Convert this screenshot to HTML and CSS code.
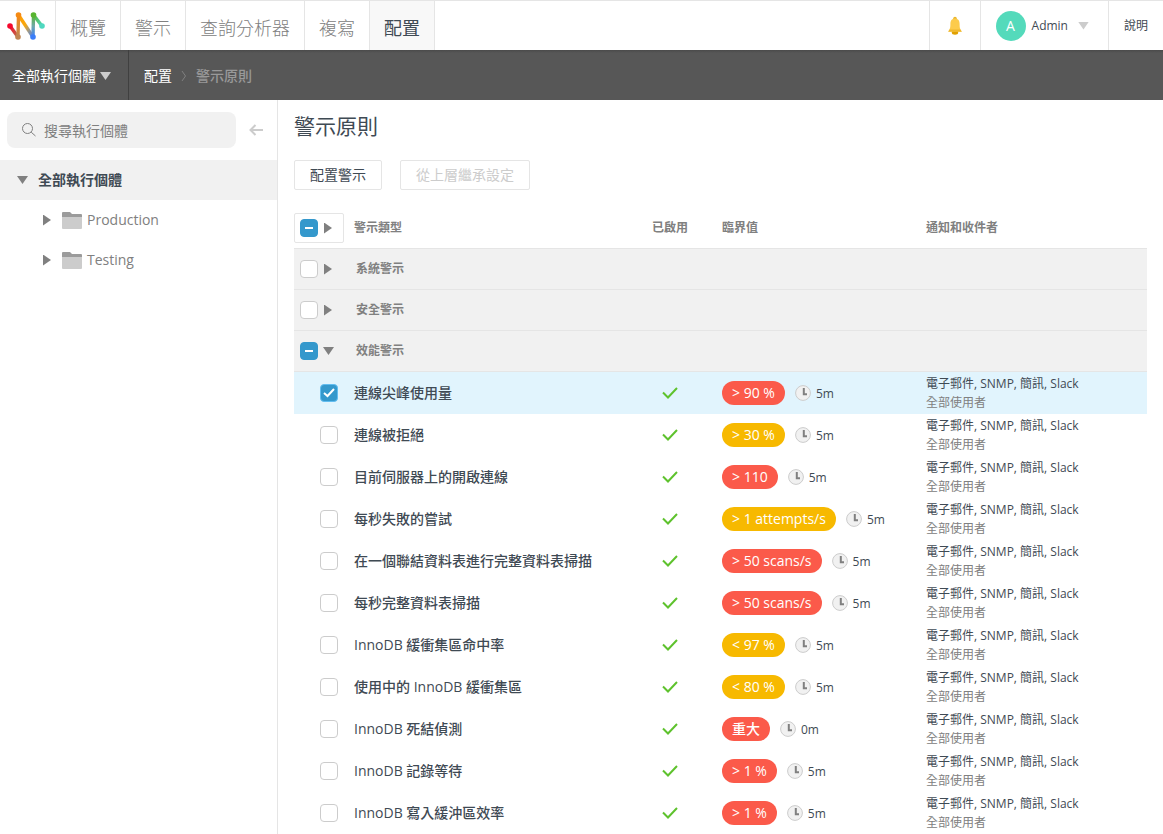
FILE: index.html
```html
<!DOCTYPE html>
<html lang="zh-Hant">
<head>
    <meta charset="UTF-8">
    <meta name="viewport" content="width=device-width, initial-scale=1.0">
    <title>警示原則</title>
    <link rel="stylesheet" href="styles.css">
</head>
<body>

    <!-- Shared icons -->
    <svg class="icon-defs" aria-hidden="true">
        <symbol id="icon-check" viewBox="0 0 16 12">
            <path d="M1 5.5L6 10.5L15 1" fill="none" stroke="#5ec22d" stroke-width="2"/>
        </symbol>
        <symbol id="icon-clock" viewBox="0 0 16 16">
            <circle cx="8" cy="8" r="7.4" fill="#f1f1f1" stroke="#ccc"/>
            <path d="M8.8 3V9.3H12" fill="none" stroke="#808080" stroke-width="2"/>
        </symbol>
        <symbol id="icon-folder" viewBox="0 0 20 17">
            <path d="M0 1a1 1 0 0 1 1-1h7l2 2h9a1 1 0 0 1 1 1v3H0z" fill="#9b9b9b"/>
            <path d="M0 5h20v11a1 1 0 0 1-1 1H1a1 1 0 0 1-1-1z" fill="#ccc"/>
        </symbol>
    </svg>

    <header class="top-bar">
        <a class="logo" href="#" aria-label="Home">
            <svg width="38" height="30" viewBox="0 0 38 30">
                <defs>
                    <linearGradient id="g1" x1="0" y1="0" x2="1" y2="1"><stop offset="0" stop-color="#f5082d"/><stop offset="1" stop-color="#b5774c"/></linearGradient>
                    <linearGradient id="g2" x1="0" y1="1" x2="0" y2="0"><stop offset="0" stop-color="#c08552"/><stop offset="1" stop-color="#f58a14"/></linearGradient>
                    <linearGradient id="g3" x1="0" y1="0" x2="1" y2="1"><stop offset="0" stop-color="#ff9c00"/><stop offset=".45" stop-color="#f9a80c"/><stop offset=".7" stop-color="#a09a88"/><stop offset="1" stop-color="#3b82f7"/></linearGradient>
                    <linearGradient id="g4" x1="0" y1="1" x2="0" y2="0"><stop offset="0" stop-color="#3b7df8"/><stop offset=".5" stop-color="#6fa9a8"/><stop offset="1" stop-color="#58b530"/></linearGradient>
                    <linearGradient id="g5" x1="0" y1="0" x2="1" y2="1"><stop offset="0" stop-color="#58b530"/><stop offset="1" stop-color="#4fd8c0"/></linearGradient>
                </defs>
                <g fill="none" stroke-width="3.4">
                    <path d="M3 15L11 26" stroke="url(#g1)"/>
                    <path d="M26.5 4L35 15" stroke="url(#g5)"/>
                    <path d="M26 26L26.5 4" stroke="url(#g4)"/>
                    <path d="M11.5 4L26 26" stroke="url(#g3)"/>
                    <path d="M11 26L11.5 4" stroke="url(#g2)"/>
                </g>
                <circle cx="3" cy="15" r="2.8" fill="#f5082d"/>
                <circle cx="11" cy="26" r="2.8" fill="#c08552"/>
                <circle cx="11.5" cy="4" r="2.8" fill="#f58a14"/>
                <circle cx="26" cy="26" r="2.8" fill="#3b7df8"/>
                <circle cx="26.5" cy="4" r="2.8" fill="#58b530"/>
                <circle cx="35" cy="15" r="2.8" fill="#4fd8c0"/>
            </svg>
        </a>
        <nav class="main-nav">
            <a href="#">概覽</a>
            <a href="#">警示</a>
            <a href="#">查詢分析器</a>
            <a href="#">複寫</a>
            <a href="#" class="active">配置</a>
        </nav>
        <div class="user-area">
            <button class="bell" type="button" aria-label="Notifications">
                <svg width="14" height="20" viewBox="0 0 14 20">
                    <circle cx="7" cy="2.5" r="1.8" fill="#e9b52c"/>
                    <ellipse cx="7" cy="16.5" rx="3.2" ry="2.2" fill="#e0a000"/>
                    <path d="M7 2.5c3.4 0 4.6 2.4 4.6 5.5 0 4 .4 5 2.2 7.6H.2C2 13 2.4 12 2.4 8c0-3.1 1.2-5.5 4.6-5.5z" fill="#fccb4b"/>
                    <path d="M1.5 13.6h11l1.3 2.2H.2z" fill="#efb82f"/>
                </svg>
            </button>
            <button class="user" type="button">
                <span class="avatar">A</span>
                <span>Admin</span>
                <span class="arrow arrow-down light"></span>
            </button>
            <a class="help" href="#">說明</a>
        </div>
    </header>

    <div class="sub-bar">
        <button class="scope" type="button">全部執行個體 <span class="arrow arrow-down light"></span></button>
        <div class="breadcrumb">
            <a href="#">配置</a>
            <svg width="6" height="12" viewBox="0 0 6 12"><path d="M1 1L4.5 6L1 11" fill="none" stroke="#808080"/></svg>
            <span>警示原則</span>
        </div>
    </div>

    <div class="page">
        <aside class="sidebar">
            <div class="search-row">
                <label class="search">
                    <svg width="16" height="16" viewBox="0 0 16 16" fill="none" stroke="#808080"><circle cx="6.5" cy="6.5" r="5"/><path d="M10.2 10.2L14.5 14"/></svg>
                    <input type="text" placeholder="搜尋執行個體" aria-label="搜尋執行個體">
                </label>
                <button class="collapse" type="button" aria-label="Collapse">
                    <svg width="14" height="12" viewBox="0 0 14 12"><path d="M14 6H1.5M6.5 1L1.5 6L6.5 11" fill="none" stroke="#ccc" stroke-width="2"/></svg>
                </button>
            </div>
            <ul class="tree">
                <li><a class="tree-item root" href="#"><span class="arrow arrow-down"></span>全部執行個體</a></li>
                <li><a class="tree-item child" href="#"><span class="arrow arrow-right"></span><svg width="20" height="17"><use href="#icon-folder"/></svg>Production</a></li>
                <li><a class="tree-item child" href="#"><span class="arrow arrow-right"></span><svg width="20" height="17"><use href="#icon-folder"/></svg>Testing</a></li>
            </ul>
        </aside>

        <main class="content">
            <h1>警示原則</h1>
            <div class="actions">
                <button type="button">配置警示</button>
                <button type="button" disabled>從上層繼承設定</button>
            </div>

            <table class="alerts">
                <colgroup>
                    <col class="col-select">
                    <col>
                    <col class="col-enabled">
                    <col class="col-threshold">
                    <col class="col-notify">
                </colgroup>
                <thead>
                    <tr>
                        <th><span class="select-all"><input type="checkbox" class="partial" aria-label="全部"><span class="arrow arrow-right"></span></span></th>
                        <th>警示類型</th>
                        <th>已啟用</th>
                        <th>臨界值</th>
                        <th>通知和收件者</th>
                    </tr>
                </thead>
                <tbody>
                    <tr class="group">
                        <td><span class="toggle"><input type="checkbox" id="g-system"><span class="arrow arrow-right"></span></span></td>
                        <td colspan="4"><label for="g-system">系統警示</label></td>
                    </tr>
                    <tr class="group">
                        <td><span class="toggle"><input type="checkbox" id="g-security"><span class="arrow arrow-right"></span></span></td>
                        <td colspan="4"><label for="g-security">安全警示</label></td>
                    </tr>
                    <tr class="group">
                        <td><span class="toggle"><input type="checkbox" id="g-performance" class="partial"><span class="arrow arrow-down"></span></span></td>
                        <td colspan="4"><label for="g-performance">效能警示</label></td>
                    </tr>
                    <tr class="alert selected">
                        <td><input type="checkbox" id="a1" checked></td>
                        <td><label for="a1">連線尖峰使用量</label></td>
                        <td><svg class="enabled" width="16" height="12"><use href="#icon-check"/></svg></td>
                        <td><div class="threshold"><span class="pill critical">&gt; 90 %</span><svg width="16" height="16"><use href="#icon-clock"/></svg><span>5m</span></div></td>
                        <td><p>電子郵件, SNMP, 簡訊, Slack</p><p class="users">全部使用者</p></td>
                    </tr>
                    <tr class="alert">
                        <td><input type="checkbox" id="a2"></td>
                        <td><label for="a2">連線被拒絕</label></td>
                        <td><svg class="enabled" width="16" height="12"><use href="#icon-check"/></svg></td>
                        <td><div class="threshold"><span class="pill warning">&gt; 30 %</span><svg width="16" height="16"><use href="#icon-clock"/></svg><span>5m</span></div></td>
                        <td><p>電子郵件, SNMP, 簡訊, Slack</p><p class="users">全部使用者</p></td>
                    </tr>
                    <tr class="alert">
                        <td><input type="checkbox" id="a3"></td>
                        <td><label for="a3">目前伺服器上的開啟連線</label></td>
                        <td><svg class="enabled" width="16" height="12"><use href="#icon-check"/></svg></td>
                        <td><div class="threshold"><span class="pill critical">&gt; 110</span><svg width="16" height="16"><use href="#icon-clock"/></svg><span>5m</span></div></td>
                        <td><p>電子郵件, SNMP, 簡訊, Slack</p><p class="users">全部使用者</p></td>
                    </tr>
                    <tr class="alert">
                        <td><input type="checkbox" id="a4"></td>
                        <td><label for="a4">每秒失敗的嘗試</label></td>
                        <td><svg class="enabled" width="16" height="12"><use href="#icon-check"/></svg></td>
                        <td><div class="threshold"><span class="pill warning">&gt; 1 attempts/s</span><svg width="16" height="16"><use href="#icon-clock"/></svg><span>5m</span></div></td>
                        <td><p>電子郵件, SNMP, 簡訊, Slack</p><p class="users">全部使用者</p></td>
                    </tr>
                    <tr class="alert">
                        <td><input type="checkbox" id="a5"></td>
                        <td><label for="a5">在一個聯結資料表進行完整資料表掃描</label></td>
                        <td><svg class="enabled" width="16" height="12"><use href="#icon-check"/></svg></td>
                        <td><div class="threshold"><span class="pill critical">&gt; 50 scans/s</span><svg width="16" height="16"><use href="#icon-clock"/></svg><span>5m</span></div></td>
                        <td><p>電子郵件, SNMP, 簡訊, Slack</p><p class="users">全部使用者</p></td>
                    </tr>
                    <tr class="alert">
                        <td><input type="checkbox" id="a6"></td>
                        <td><label for="a6">每秒完整資料表掃描</label></td>
                        <td><svg class="enabled" width="16" height="12"><use href="#icon-check"/></svg></td>
                        <td><div class="threshold"><span class="pill critical">&gt; 50 scans/s</span><svg width="16" height="16"><use href="#icon-clock"/></svg><span>5m</span></div></td>
                        <td><p>電子郵件, SNMP, 簡訊, Slack</p><p class="users">全部使用者</p></td>
                    </tr>
                    <tr class="alert">
                        <td><input type="checkbox" id="a7"></td>
                        <td><label for="a7">InnoDB 緩衝集區命中率</label></td>
                        <td><svg class="enabled" width="16" height="12"><use href="#icon-check"/></svg></td>
                        <td><div class="threshold"><span class="pill warning">&lt; 97 %</span><svg width="16" height="16"><use href="#icon-clock"/></svg><span>5m</span></div></td>
                        <td><p>電子郵件, SNMP, 簡訊, Slack</p><p class="users">全部使用者</p></td>
                    </tr>
                    <tr class="alert">
                        <td><input type="checkbox" id="a8"></td>
                        <td><label for="a8">使用中的 InnoDB 緩衝集區</label></td>
                        <td><svg class="enabled" width="16" height="12"><use href="#icon-check"/></svg></td>
                        <td><div class="threshold"><span class="pill warning">&lt; 80 %</span><svg width="16" height="16"><use href="#icon-clock"/></svg><span>5m</span></div></td>
                        <td><p>電子郵件, SNMP, 簡訊, Slack</p><p class="users">全部使用者</p></td>
                    </tr>
                    <tr class="alert">
                        <td><input type="checkbox" id="a9"></td>
                        <td><label for="a9">InnoDB 死結偵測</label></td>
                        <td><svg class="enabled" width="16" height="12"><use href="#icon-check"/></svg></td>
                        <td><div class="threshold"><span class="pill critical">重大</span><svg width="16" height="16"><use href="#icon-clock"/></svg><span>0m</span></div></td>
                        <td><p>電子郵件, SNMP, 簡訊, Slack</p><p class="users">全部使用者</p></td>
                    </tr>
                    <tr class="alert">
                        <td><input type="checkbox" id="a10"></td>
                        <td><label for="a10">InnoDB 記錄等待</label></td>
                        <td><svg class="enabled" width="16" height="12"><use href="#icon-check"/></svg></td>
                        <td><div class="threshold"><span class="pill critical">&gt; 1 %</span><svg width="16" height="16"><use href="#icon-clock"/></svg><span>5m</span></div></td>
                        <td><p>電子郵件, SNMP, 簡訊, Slack</p><p class="users">全部使用者</p></td>
                    </tr>
                    <tr class="alert">
                        <td><input type="checkbox" id="a11"></td>
                        <td><label for="a11">InnoDB 寫入緩沖區效率</label></td>
                        <td><svg class="enabled" width="16" height="12"><use href="#icon-check"/></svg></td>
                        <td><div class="threshold"><span class="pill critical">&gt; 1 %</span><svg width="16" height="16"><use href="#icon-clock"/></svg><span>5m</span></div></td>
                        <td><p>電子郵件, SNMP, 簡訊, Slack</p><p class="users">全部使用者</p></td>
                    </tr>
                </tbody>
            </table>
        </main>
    </div>

    <script>
        // Groups with only some alerts ticked
        document.querySelectorAll('.partial').forEach(box => {
            box.indeterminate = true;
        });
    </script>

</body>
</html>
```
FILE: styles.css
```css
/* Base */
* {
    margin: 0;
    padding: 0;
    box-sizing: border-box;
}

body {
    font-family: 'Open Sans', 'Noto Sans CJK TC', sans-serif;
    font-size: 14px;
    line-height: 20px;
    color: #3f4a54;
    background: #fff;
    min-height: 100vh;
    display: flex;
    flex-direction: column;
}

a {
    color: inherit;
    text-decoration: none;
}

button {
    font: inherit;
    color: inherit;
    background: none;
    border: none;
    cursor: pointer;
}

svg {
    display: block;
    flex-shrink: 0;
}

.icon-defs {
    position: absolute;
    width: 0;
    height: 0;
}

/* Triangles */
.arrow {
    display: inline-block;
    flex-shrink: 0;
    background: #808080;
}

.arrow-down {
    width: 11px;
    height: 8px;
    clip-path: polygon(0 0, 100% 0, 50% 100%);
}

.arrow-right {
    width: 8px;
    height: 11px;
    clip-path: polygon(0 0, 100% 50%, 0 100%);
}

.arrow.light {
    background: #ccc;
}

/* Top bar */
.top-bar {
    display: flex;
    height: 50px;
    border-top: 1px solid #e5e5e5;
}

.logo {
    display: flex;
    align-items: center;
    width: 55px;
    padding-left: 7px;
}

.main-nav {
    display: flex;
    border-right: 1px solid #e5e5e5;
}

.main-nav a {
    display: flex;
    align-items: center;
    padding: 4px 14px 0;
    border-left: 1px solid #e5e5e5;
    font-size: 18px;
    font-weight: 300;
    color: #808080;
}

.main-nav a.active {
    background: #f8f8f8;
    color: #3f4a54;
    font-weight: 400;
}

.user-area {
    display: flex;
    margin-left: auto;
    font-size: 12px;
}

.user-area > * {
    display: flex;
    align-items: center;
    border-left: 1px solid #e5e5e5;
}

.bell {
    padding: 0 18px;
}

.user {
    gap: 6px;
    padding: 0 19px 0 15px;
}

.user .arrow {
    margin-left: 4px;
}

.avatar {
    width: 30px;
    height: 30px;
    border-radius: 50%;
    background: #54dabb;
    color: #fff;
    font-size: 14px;
    line-height: 30px;
    text-align: center;
}

.help {
    padding: 0 15px;
}

/* Sub bar */
.sub-bar {
    display: flex;
    height: 50px;
    background: linear-gradient(#4a4a4a, #575757 3px);
    color: #fff;
}

.scope {
    display: flex;
    align-items: center;
    gap: 4px;
    padding: 2px 17px 0 12px;
    border-right: 1px solid #404040;
}

.breadcrumb {
    display: flex;
    align-items: center;
    gap: 9px;
    padding: 2px 0 0 15px;
}

.breadcrumb span {
    color: #999;
    font-weight: 500;
}

/* Sidebar */
.page {
    display: flex;
    flex: 1;
}

.sidebar {
    width: 278px;
    flex-shrink: 0;
    border-right: 1px solid #e5e5e5;
}

.search-row {
    display: flex;
    gap: 13px;
    padding: 12px 14px 12px 7px;
}

.search {
    display: flex;
    flex: 1;
    align-items: center;
    gap: 7px;
    height: 36px;
    padding: 0 14px;
    border-radius: 8px;
    background: #f1f1f1;
}

.search input {
    width: 100%;
    padding-top: 2px;
    border: none;
    outline: none;
    background: none;
    font: inherit;
}

.search input::placeholder {
    color: #808080;
}

.tree {
    list-style: none;
}

.tree-item {
    display: flex;
    align-items: center;
    height: 40px;
    color: #808080;
}

.tree-item.root {
    gap: 10px;
    padding-left: 17px;
    background: #f1f1f1;
    color: #3f4a54;
    font-weight: 600;
}

.tree-item.child {
    gap: 5px;
    padding-left: 43px;
}

.tree-item.child .arrow {
    margin-right: 6px;
}

/* Content */
.content {
    flex: 1;
    padding: 12px 16px 0;
}

h1 {
    margin-bottom: 20px;
    font-size: 21px;
    line-height: 28px;
    font-weight: 400;
}

.actions {
    display: flex;
    gap: 18px;
    margin-bottom: 18px;
}

.actions button {
    height: 30px;
    padding: 0 15px;
    border: 1px solid #e5e5e5;
    border-radius: 2px;
}

.actions button:disabled {
    color: #ccc;
    cursor: default;
}

/* Checkboxes */
input[type="checkbox"] {
    appearance: none;
    display: block;
    width: 18px;
    height: 18px;
    border: 1px solid #ccc;
    border-radius: 4px;
    background: #fff center no-repeat;
}

input[type="checkbox"]:checked,
input[type="checkbox"]:indeterminate {
    border-color: #3498cc;
    background-color: #3498cc;
}

input[type="checkbox"]:checked {
    border-color: #62bdf0;
    background-image: url("data:image/svg+xml,%3Csvg xmlns='http://www.w3.org/2000/svg' width='12' height='10'%3E%3Cpath d='M1 5L4.5 8L11 1' fill='none' stroke='white' stroke-width='2'/%3E%3C/svg%3E");
}

input[type="checkbox"]:indeterminate {
    background-image: linear-gradient(#fff, #fff);
    background-size: 8px 2px;
}

/* Alerts table */
.alerts {
    width: 100%;
    table-layout: fixed;
    border-collapse: separate;
    border-spacing: 0;
    text-align: left;
}

.col-select {
    width: 60px;
}

.col-enabled {
    width: 70px;
}

.col-threshold {
    width: 204px;
}

.col-notify {
    width: 221px;
}

.alerts th {
    height: 41px;
    border-bottom: 1px solid #e5e5e5;
    font-size: 12px;
    font-weight: 700;
    color: #808080;
}

.select-all,
.toggle {
    display: flex;
    align-items: center;
    gap: 6px;
    padding-left: 5px;
}

.select-all {
    width: 50px;
    height: 30px;
    border: 1px solid #e5e5e5;
    border-radius: 2px;
}

.toggle {
    padding-left: 6px;
}

.toggle .arrow-down {
    margin-left: -1px;
}

.group td {
    height: 41px;
    border-bottom: 1px solid #e5e5e5;
    background: #f1f1f1;
    font-size: 12px;
    font-weight: 700;
    color: #808080;
}

.group label {
    padding-left: 2px;
}

.alert td {
    height: 42px;
    font-size: 12px;
    line-height: 19px;
}

.alert input {
    margin-left: 26px;
}

.alert label {
    font-size: 14px;
    font-weight: 500;
}

.alert.selected td {
    background: #e1f4fd;
}

.enabled {
    margin-left: 10px;
}

.threshold {
    display: flex;
    align-items: center;
}

.threshold svg {
    margin: 0 5px 0 10px;
}

.pill {
    height: 24px;
    padding: 0 10px;
    border-radius: 12px;
    color: #fff;
    font-size: 14px;
    font-weight: 500;
    line-height: 24px;
}

.critical {
    background: #fb5a4a;
}

.warning {
    background: #f7b900;
}

.users {
    color: #808080;
}
```
